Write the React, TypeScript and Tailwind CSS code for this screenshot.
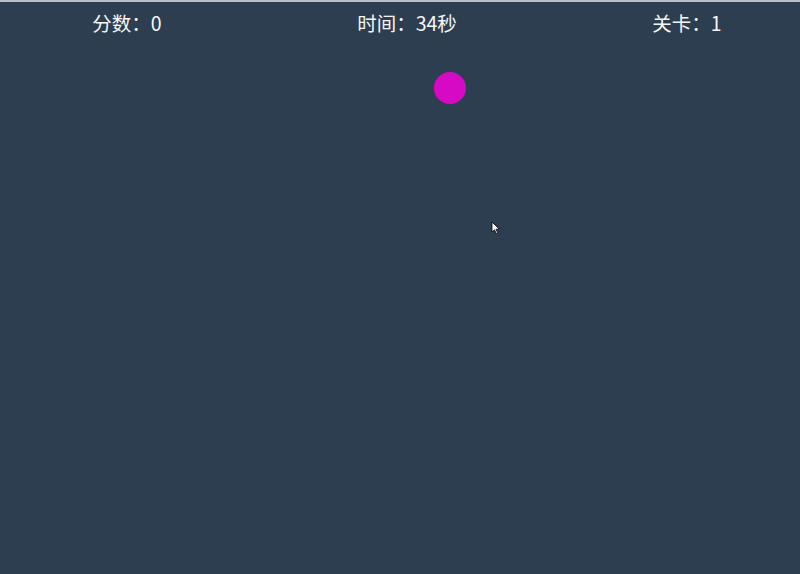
import React from "react";

export default function App() {
  return (
    <div
      className="relative w-[800px] h-[574px] overflow-hidden bg-[#2c3e50] border-t-2 border-[#b9bdc5]"
      style={{ fontFamily: '"Noto Sans CJK SC", "Noto Sans", sans-serif' }}
    >
      <div className="flex gap-[80px] pl-[27px] pt-[5px] text-[19.5px] leading-[32px] text-[#f4f6f7]">
        <div className="w-[200px] text-center">分数：0</div>
        <div className="w-[200px] text-center">时间：34秒</div>
        <div className="w-[200px] text-center">关卡：1</div>
      </div>
      <div className="absolute left-[434px] top-[70px] w-[32px] h-[32px] rounded-full bg-[#d60ac4]" />
      <svg
        className="absolute left-[491px] top-[219px]"
        width="10"
        height="14"
        viewBox="0 0 10 14"
      >
        <path d="M1 1 L1 11 L3.5 8.8 L5.3 12.6 L6.8 11.9 L5 8.2 L8.3 8.2 Z" fill="#fff" stroke="#000" strokeWidth="0.8" />
      </svg>
    </div>
  );
}
